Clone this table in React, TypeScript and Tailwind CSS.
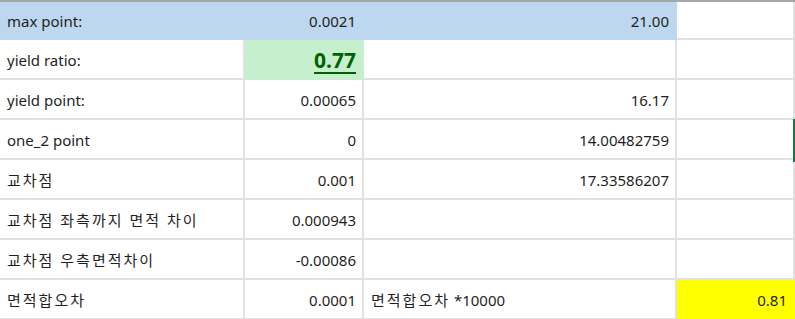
import React from "react";

type Cell = {
  text?: string;
  align?: "left" | "right";
  fill?: "blue" | "green" | "yellow";
};

const rows: Cell[][] = [
  [
    { text: "max point:", fill: "blue" },
    { text: "0.0021", align: "right", fill: "blue" },
    { text: "21.00", align: "right", fill: "blue" },
    {},
  ],
  [{ text: "yield ratio:" }, { text: "0.77", align: "right", fill: "green" }, {}, {}],
  [{ text: "yield point:" }, { text: "0.00065", align: "right" }, { text: "16.17", align: "right" }, {}],
  [{ text: "one_2 point" }, { text: "0", align: "right" }, { text: "14.00482759", align: "right" }, {}],
  [{ text: "교차점" }, { text: "0.001", align: "right" }, { text: "17.33586207", align: "right" }, {}],
  [{ text: "교차점 좌측까지 면적 차이" }, { text: "0.000943", align: "right" }, {}, {}],
  [{ text: "교차점 우측면적차이" }, { text: "-0.00086", align: "right" }, {}, {}],
  [
    { text: "면적합오차" },
    { text: "0.0001", align: "right" },
    { text: "면적합오차 *10000" },
    { text: "0.81", align: "right", fill: "yellow" },
  ],
];

const fillClass = {
  blue: "bg-[#bdd7ee] border-[#bdd7ee]",
  green: "bg-[#c6efce] border-[#c6efce]",
  yellow: "bg-[#ffff00] border-[#ffff00]",
};

// hangul in the sheet renders wider than latin, so space those runs out
const Label = ({ text }: { text: string }) => {
  const parts = text.split(/([\uac00-\ud7a3 ]*[\uac00-\ud7a3])/);
  return (
    <>
      {parts.map((p, i) =>
        /[\uac00-\ud7a3]/.test(p) ? (
          <span key={i} className="tracking-[2px]">
            {p}
          </span>
        ) : (
          <span key={i}>{p}</span>
        )
      )}
    </>
  );
};

const SheetCell = ({ cell }: { cell: Cell }) => {
  const fill = cell.fill ? fillClass[cell.fill] : "bg-white border-[#e1e1e1]";
  return (
    <div
      className={`flex items-center pt-[3px] border-r-2 border-b-2 ${fill} ${
        cell.align === "right" ? "justify-end pr-[6px]" : "justify-start pl-[7px]"
      }`}
    >
      {cell.fill === "green" ? (
        <span className="text-[21px] leading-none font-bold text-[#006100] underline decoration-2 underline-offset-[4px]">
          {cell.text}
        </span>
      ) : (
        <span className="whitespace-nowrap">{cell.text && <Label text={cell.text} />}</span>
      )}
    </div>
  );
};

const App = () => {
  return (
    <div className="relative w-[795px] h-[319px] overflow-hidden bg-white">
      <div className="border-t-2 border-[#a6a6a6] text-[15px] text-[#1f1f1f] [font-family:'Noto_Sans','Noto_Sans_CJK_KR',sans-serif]">
        <div className="grid grid-cols-[245px_119px_313px_118px] grid-rows-[38px_repeat(7,40px)]">
          {rows.map((row, r) =>
            row.map((cell, c) => <SheetCell key={`${r}-${c}`} cell={cell} />)
          )}
        </div>
      </div>
      {/* active cell edge in the next column */}
      <div className="absolute left-[793px] top-[119px] w-[2px] h-[43px] bg-[#217346]" />
    </div>
  );
};

export default App;
